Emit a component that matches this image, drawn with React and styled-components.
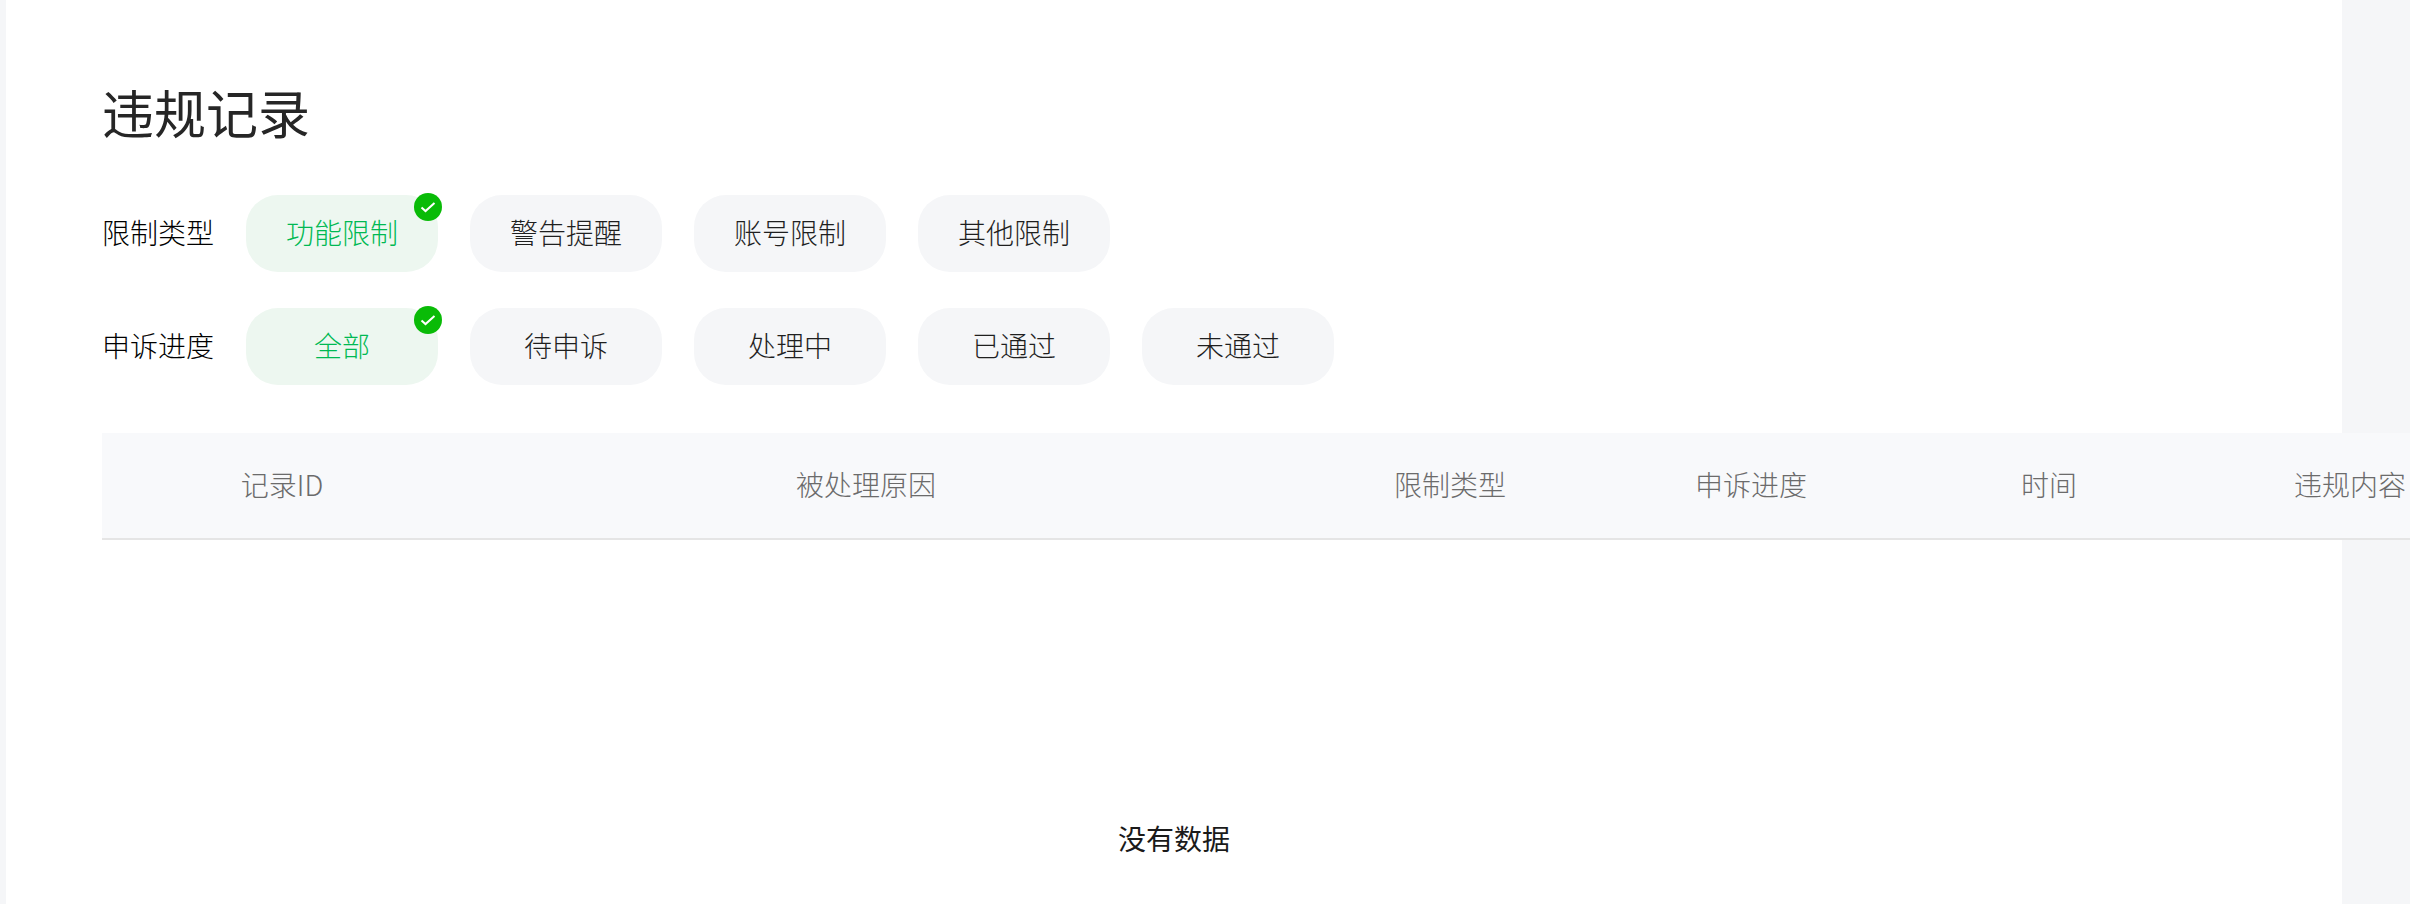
import React from 'react';
import styled, { createGlobalStyle } from 'styled-components';

const GlobalStyle = createGlobalStyle`
  html, body {
    margin: 0;
    height: 100%;
    overflow: hidden;
    background: #f5f6f8;
  }
  body {
    font-family: "Noto Sans CJK SC", "Liberation Sans", sans-serif;
    font-weight: 300;
  }
`;

const Page = styled.div`
  position: relative;
  width: 2410px;
  height: 904px;
  overflow: hidden;
  padding: 0 68px 0 6px;
  box-sizing: border-box;
`;

const Panel = styled.main`
  background: #fff;
  height: 904px;
  padding: 74px 0 0 96px;
  box-sizing: border-box;
`;

const Title = styled.h1`
  margin: 0 0 45px;
  font-size: 52px;
  line-height: 76px;
  font-weight: 400;
  color: #262626;
`;

const FilterRow = styled.div`
  display: flex;
  align-items: center;
  height: 77px;
  margin-bottom: 36px;
`;

const FilterLabel = styled.div`
  width: 144px;
  padding-bottom: 4px;
  font-size: 28px;
  color: #000;
`;

const Chips = styled.div`
  display: flex;
  gap: 32px;
`;

const Chip = styled.div`
  position: relative;
  width: 192px;
  height: 77px;
  padding-bottom: 4px;
  box-sizing: border-box;
  border-radius: 32px;
  display: flex;
  align-items: center;
  justify-content: center;
  font-size: 28px;
  background: ${({ $active }) => ($active ? '#edf7f0' : '#f5f6f8')};
  color: ${({ $active }) => ($active ? '#00b953' : '#1f1f1f')};
`;

const Badge = styled.svg`
  position: absolute;
  top: -2px;
  right: -4px;
  width: 28px;
  height: 28px;
`;

const TableHead = styled.div`
  display: grid;
  grid-template-columns: 360px 808px 360px 242px 354px 248px;
  width: 2308px;
  height: 107px;
  margin-top: 48px;
  background: #f8f9fb;
  border-bottom: 2px solid #e5e5e5;
  box-sizing: border-box;
  overflow: hidden;
`;

const HeadCell = styled.div`
  display: flex;
  align-items: center;
  justify-content: center;
  padding-bottom: 4px;
  font-size: 28px;
  color: #6b6b6b;
`;

const Empty = styled.div`
  margin-left: -96px;
  padding-top: 277px;
  text-align: center;
  font-size: 28px;
  font-weight: 400;
  line-height: 42px;
  color: #1a1a1a;
`;

// faint account id repeated over the whole page
const Watermark = styled.div`
  position: absolute;
  top: 46px;
  left: -105px;
  display: grid;
  grid-template-columns: repeat(7, 433px);
  grid-auto-rows: 93px;
  pointer-events: none;
`;

const Mark = styled.span`
  font-family: "Liberation Sans", sans-serif;
  font-size: 28px;
  line-height: 28px;
  color: rgba(0, 0, 0, 0.012);
`;

const filters = [
  { label: '限制类型', chips: ['功能限制', '警告提醒', '账号限制', '其他限制'] },
  { label: '申诉进度', chips: ['全部', '待申诉', '处理中', '已通过', '未通过'] },
];

const columns = ['记录ID', '被处理原因', '限制类型', '申诉进度', '时间', '违规内容'];

function CheckBadge() {
  return (
    <Badge viewBox="0 0 28 28">
      <circle cx="14" cy="14" r="14" fill="#09bb07" />
      <path d="M7.5 14.5l4 3.6 9-8.2" fill="none" stroke="#fff" strokeWidth="2" />
    </Badge>
  );
}

export default function App() {
  return (
    <>
      <GlobalStyle />
      <Page>
        <Panel>
          <Title>违规记录</Title>
          {filters.map((f) => (
            <FilterRow key={f.label}>
              <FilterLabel>{f.label}</FilterLabel>
              <Chips>
                {f.chips.map((c, i) => (
                  <Chip key={c} $active={i === 0}>
                    {c}
                    {i === 0 && <CheckBadge />}
                  </Chip>
                ))}
              </Chips>
            </FilterRow>
          ))}
          <TableHead>
            {columns.map((c) => (
              <HeadCell key={c}>{c}</HeadCell>
            ))}
          </TableHead>
          <Empty>没有数据</Empty>
        </Panel>
        <Watermark>
          {Array.from({ length: 70 }, (_, i) => (
            <Mark key={i}>bHCH1D89gVe</Mark>
          ))}
        </Watermark>
      </Page>
    </>
  );
}
